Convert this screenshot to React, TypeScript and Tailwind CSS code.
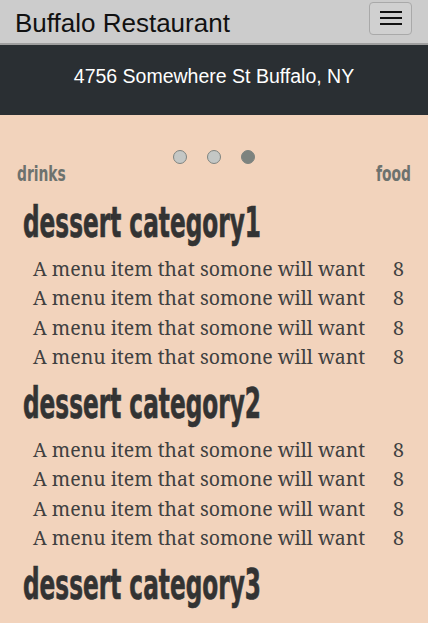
const items = Array.from({ length: 4 }, () => "A menu item that somone will want");

function Category({ title, first, count = 4 }: { title: string; first?: boolean; count?: number }) {
  return (
    <section className={first ? "mt-[14px]" : "mt-[10px]"}>
      <h2
        className="pl-[23px] h-[44px] leading-[44px] text-[43px] font-bold text-[#333333] whitespace-nowrap [-webkit-text-stroke:0.7px_#333333]"
        style={{ fontFamily: '"DejaVu Sans Condensed", "DejaVu Sans", sans-serif' }}
      >
        <span className="inline-block origin-left scale-x-[0.6]">{title}</span>
      </h2>
      {count > 0 && (
        <ul
          className="mt-[10px] pl-[33px] pr-[24px] text-[19.5px] leading-[29.25px] text-[#404040]"
          style={{ fontFamily: '"Noto Serif", "DejaVu Serif", serif' }}
        >
          {items.slice(0, count).map((t, i) => (
            <li key={i} className="flex justify-between whitespace-nowrap">
              <span>{t}</span>
              <span>8</span>
            </li>
          ))}
        </ul>
      )}
    </section>
  );
}

export default function App() {
  return (
    <div
      className="h-[623px] overflow-hidden bg-[#f2d3bc]"
      style={{ fontFamily: '"Liberation Sans", Arial, sans-serif' }}
    >
      <header className="h-[45px] bg-[#cccccc] border-b-2 border-[#9f9f9f] flex items-center justify-between pl-[15px] pr-[16px]">
        <h1 className="text-[26px] leading-none text-[#111111] pt-[2px]">Buffalo Restaurant</h1>
        <button
          aria-label="menu"
          className="w-[43px] h-[33px] -mt-[7px] rounded-[4px] border border-[#a9a9a9] bg-[#d0d0d0] flex flex-col items-center justify-center gap-[4px]"
        >
          <span className="block w-[22px] h-[2px] bg-[#111]" />
          <span className="block w-[22px] h-[2px] bg-[#111]" />
          <span className="block w-[22px] h-[2px] bg-[#111]" />
        </button>
      </header>
      <div className="h-[70px] bg-[#2a2f33] flex justify-center pt-[19px]">
        <p className="text-[19.5px] leading-[24px] text-white">4756 Somewhere St Buffalo, NY</p>
      </div>
      <main className="pt-[35px]">
        <div className="flex justify-center gap-[20px]">
          <span className="w-[14px] h-[14px] rounded-full bg-[#c4c7c5] border border-[#7f8480]" />
          <span className="w-[14px] h-[14px] rounded-full bg-[#c4c7c5] border border-[#7f8480]" />
          <span className="w-[14px] h-[14px] rounded-full bg-[#7d837f] border border-[#7d837f]" />
        </div>
        <div
          className="-mt-[2px] flex justify-between px-[17px] text-[22px] leading-[24px] font-bold text-[#6d726e] whitespace-nowrap"
          style={{ fontFamily: '"DejaVu Sans Condensed", "DejaVu Sans", sans-serif' }}
        >
          <span className="inline-block origin-left scale-x-[0.7]">drinks</span>
          <span className="inline-block origin-right scale-x-[0.7]">food</span>
        </div>
        <Category title="dessert category1" first />
        <Category title="dessert category2" />
        <Category title="dessert category3" count={0} />
      </main>
    </div>
  );
}
